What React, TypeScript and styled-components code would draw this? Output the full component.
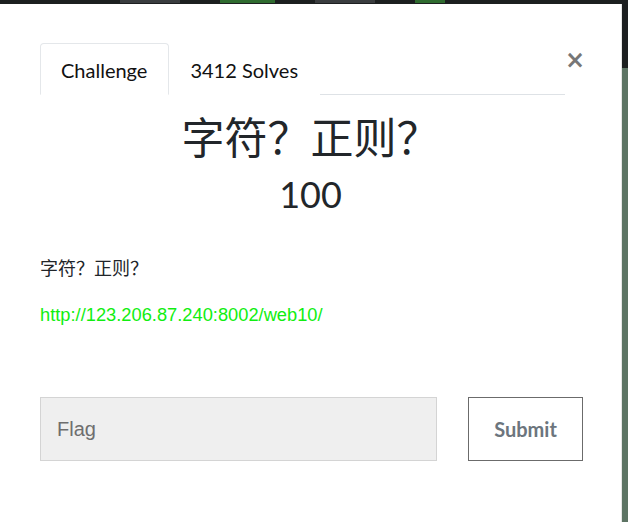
import * as React from "react";
import styled, { createGlobalStyle } from "styled-components";

const GlobalStyle = createGlobalStyle`
  html, body {
    margin: 0;
    padding: 0;
    background: #1c1f20;
  }
  * {
    box-sizing: border-box;
  }
`;

const Page = styled.div`
  width: 628px;
  height: 522px;
  display: grid;
  grid-template-columns: 622px 6px;
  grid-template-rows: 4px 1fr;
  overflow: hidden;
  font-family: Lato, "Noto Sans CJK SC", sans-serif;
  color: #212529;
`;

const BackdropTop = styled.div`
  grid-column: 1 / 3;
  display: flex;
  gap: 40px;
  padding-left: 120px;
  background: #1c1f20;
`;

const Smudge = styled.span<{ $w: number; $green?: boolean }>`
  width: ${(p) => p.$w}px;
  height: 3px;
  background: ${(p) => (p.$green ? "#2f6b2f" : "#3a3d3f")};
`;

const BackdropSide = styled.div`
  display: flex;
  flex-direction: column;
`;

const SideDark = styled.div`
  height: 64px;
  background: #1c1f20;
`;

const SideGreen = styled.div`
  flex: 1;
  background: #5d7464;
`;

const Modal = styled.div`
  background: #fff;
  padding: 39px 40px 0 40px;
  border-right: 1px solid #e6e6e6;
`;

const Header = styled.div`
  display: flex;
  align-items: flex-start;
`;

const Tabs = styled.nav`
  flex: 1;
  display: flex;
  height: 52px;
  border-bottom: 1px solid #dee2e6;
`;

const Tab = styled.div<{ $active?: boolean }>`
  padding: 0 21px 0 20px;
  height: 52px;
  line-height: 52px;
  font-size: 20px;
  color: #111;
  border: 1px solid ${(p) => (p.$active ? "#e4e7ea" : "transparent")};
  border-bottom-color: ${(p) => (p.$active ? "#fff" : "transparent")};
  border-radius: 4px 4px 0 0;
  background: #fff;
`;

const Close = styled.button`
  width: 16px;
  margin-top: 2px;
  padding: 0;
  border: 0;
  background: none;
  font-family: "DejaVu Sans", sans-serif;
  font-size: 24px;
  line-height: 30px;
  font-weight: bold;
  color: #777;
  cursor: pointer;
`;

const Title = styled.h2`
  margin: 19px 0 0;
  text-align: center;
  font-size: 43px;
  line-height: 48px;
  font-weight: 400;
  color: #22262a;
`;

const Points = styled.h3`
  margin: 12px 0 0;
  text-align: center;
  font-size: 36px;
  line-height: 40px;
  font-weight: 400;
  color: #22262a;
`;

const Description = styled.div`
  margin-top: 42px;
  font-size: 18px;
  line-height: 24px;
`;

const Para = styled.p`
  margin: 0 0 22px;
`;

const Link = styled.a`
  font-family: "Liberation Sans", Arial, sans-serif;
  font-size: 18.3px;
  color: #11ee11;
  text-decoration: none;
`;

const Form = styled.form`
  margin-top: 70px;
  display: flex;
  gap: 31px;
`;

const FlagInput = styled.input`
  flex: 0 0 397px;
  width: 397px;
  height: 64px;
  padding: 0 16px;
  background: #efefef;
  border: 1px solid #d4d4d4;
  font-family: "Liberation Sans", Arial, sans-serif;
  font-size: 20px;
  color: #333;
  outline: none;
  &::placeholder {
    color: #6e6e6e;
  }
`;

const SubmitButton = styled.button`
  flex: 0 0 115px;
  height: 64px;
  background: #fff;
  border: 1px solid #6b6b6b;
  font-family: Lato, sans-serif;
  font-weight: 700;
  font-size: 20px;
  color: #6c757d;
  cursor: pointer;
`;

export default function App() {
  return (
    <>
      <GlobalStyle />
      <Page>
        <BackdropTop>
          <Smudge $w={60} />
          <Smudge $w={55} $green />
          <Smudge $w={60} />
          <Smudge $w={30} $green />
        </BackdropTop>
        <Modal>
          <Header>
            <Tabs>
              <Tab $active>Challenge</Tab>
              <Tab>3412 Solves</Tab>
            </Tabs>
            <Close aria-label="Close">×</Close>
          </Header>
          <Title>字符？正则？</Title>
          <Points>100</Points>
          <Description>
            <Para>字符？正则？</Para>
            <Para>
              <Link href="#">http://123.206.87.240:8002/web10/</Link>
            </Para>
          </Description>
          <Form onSubmit={(e) => e.preventDefault()}>
            <FlagInput placeholder="Flag" />
            <SubmitButton type="submit">Submit</SubmitButton>
          </Form>
        </Modal>
        <BackdropSide>
          <SideDark />
          <SideGreen />
        </BackdropSide>
      </Page>
    </>
  );
}
